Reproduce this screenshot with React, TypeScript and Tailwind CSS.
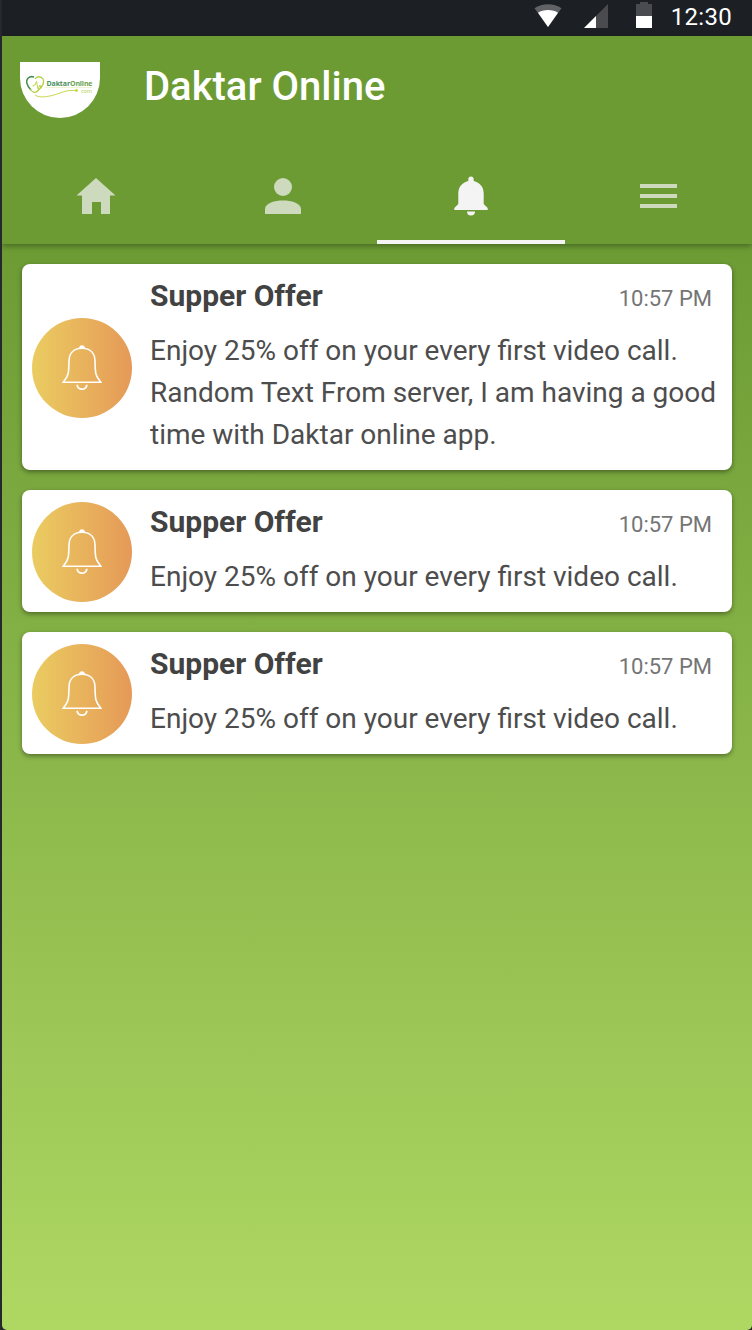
import React from "react";

const offers = [
  {
    title: "Supper Offer",
    time: "10:57 PM",
    lines: [
      "Enjoy 25% off on your every first video call.",
      "Random Text From server, I am having a good",
      "time with Daktar online app.",
    ],
  },
  { title: "Supper Offer", time: "10:57 PM", lines: ["Enjoy 25% off on your every first video call."] },
  { title: "Supper Offer", time: "10:57 PM", lines: ["Enjoy 25% off on your every first video call."] },
];

function StatusBar() {
  return (
    <div className="flex h-9 shrink-0 items-start justify-end bg-[#1c1f24] pr-5 text-white">
      <svg className="mt-1 mr-[22px] h-6 w-7" viewBox="0 0 28 24" fill="#fff">
        <path d="M14 23 0.5 4.3C8-1.2 20-1.2 27.5 4.3Z" fillOpacity=".3" />
        <path d="M14 23 4 8.700C9 5.200 19 5.200 24 8.700Z" />
      </svg>
      <svg className="mt-1 mr-7 h-6 w-6" viewBox="0 0 24 24" fill="#fff">
        <path d="M0 24 24 0V24Z" fillOpacity=".2" />
        <path d="M0 24 12 12V24Z" />
      </svg>
      <svg className="mt-0.5 mr-[19px] h-[26px] w-4" viewBox="0 0 16 26" fill="#fff">
        <path d="M4 0h8v2h4v12H0V2h4Z" fillOpacity=".2" />
        <path d="M0 14h16v12H0z" />
      </svg>
      <span className="text-[24px] leading-[35px] tracking-[0.3px]">12:30</span>
    </div>
  );
}

function Logo() {
  return (
    <svg className="h-14 w-20" viewBox="0 0 80 56" fill="none">
      <path d="M0 0H80V16A40 40 0 0 1 0 16Z" fill="#fff" />
      <path d="M14 15C9 13.500 6 17 6.800 21C7.500 24 9 26 11 28" stroke="#459051" strokeWidth="1.500" />
      <path d="M10 27C12 30 15 32 18 28.500C23 24 25 20 23 17C21 14 17 14 15 17" stroke="#b5cf3f" strokeWidth="1.300" />
      <path d="M12.500 24 15 23 16.500 19.500 18 27 20 23 21 26" stroke="#b9cf35" strokeWidth=".9" />
      <path d="M15 33C20 37 32 34 40 31S50 28.500 56 28.500" stroke="#cad84b" strokeWidth="1" />
      <path d="M25 25.500H72" stroke="#dce7a4" strokeWidth=".5" />
      <circle cx="56.500" cy="28.500" r="1.400" fill="#c5d83a" />
      <text x="26.500" y="23.500" textLength="46" fontFamily="Open Sans" fontSize="7" fontWeight="700" fill="#4b8f60">
        Daktar<tspan fill="#6ba14d">Online</tspan>
      </text>
      <text x="61" y="30.500" textLength="11" fontFamily="Open Sans" fontSize="5.500" fontWeight="600" fill="#c3d878">com</text>
    </svg>
  );
}

function Tabs() {
  return (
    <nav className="grid h-[96px] grid-cols-4">
      <div className="flex justify-center pt-[29px]">
        <svg className="h-[38px] w-10" viewBox="0 0 40 38" fill="#cddabd">
          <path d="M20 1 39.500 18.500H34V37H25V25H16V37H6V18.500H.5Z" />
        </svg>
      </div>
      <div className="flex justify-center pt-[29px]">
        <svg className="h-[38px] w-10" viewBox="0 0 40 38" fill="#cddabd">
          <circle cx="20" cy="10" r="9" />
          <path d="M2 37V32C2 26 12 23.500 20 23.500S38 26 38 32V37Z" />
        </svg>
      </div>
      <div className="flex justify-center border-b-4 border-[#f4f4f4] pt-[28px]">
        <svg className="h-10 w-9" viewBox="0 0 36 40" fill="#f4f4f4">
          <path d="M18 .5C16.300 .5 15.300 1.700 15.300 3.300V5C9 6.500 5.300 11 5.300 17.500V28L1.300 32V34H34.700V32L30.700 28V17.500C30.700 11 27 6.500 20.700 5V3.300C20.700 1.700 19.700 .5 18 .5ZM14 35.500A4 4 0 0 0 22 35.500Z" />
        </svg>
      </div>
      <div className="flex justify-center pt-[36px]">
        <svg className="h-6 w-[37px]" viewBox="0 0 37 24" fill="#cddabd">
          <path d="M0 0h37v4H0zM0 10h37v4H0zM0 20h37v4H0z" />
        </svg>
      </div>
    </nav>
  );
}

function OfferIcon() {
  return (
    <div className="flex size-[100px] shrink-0 items-center justify-center rounded-full bg-linear-to-r from-[#eacc61] to-[#e59957]">
      <svg className="h-[46px] w-10" viewBox="0 0 40 46" fill="none" stroke="#fff">
        <path d="M17 3.500C17 -.8 23 -.8 23 3.500Z" fill="#fff" stroke="none" />
        <path d="M20 3.300C11 3.300 7.200 9 7 16C6.800 28 6.700 31 1.200 37.300H38.800C33.300 31 33.200 28 33 16C32.800 9 29 3.300 20 3.300Z" strokeWidth="1.600" />
        <path d="M15.200 39.700C15.200 45.700 24.800 45.700 24.800 39.700" strokeWidth="1.800" />
      </svg>
    </div>
  );
}

export default function App() {
  return (
    <div className="h-[1330px] w-[752px] overflow-hidden bg-[#25282c] pl-0.5 font-['Roboto',sans-serif]">
      <div className="flex h-full flex-col overflow-hidden rounded-b-[5px]">
        <StatusBar />
        <header className="relative h-[208px] shrink-0 bg-[#6c9b34] shadow-[0_2px_6px_rgba(0,0,0,0.35)]">
          <div className="flex h-28 pt-[26px] pl-[18px]">
            <Logo />
            <h1 className="ml-11 text-[40px] leading-[50px] font-medium text-white">Daktar Online</h1>
          </div>
          <Tabs />
        </header>
        <main className="flex grow flex-col gap-5 bg-linear-to-b from-[#6c9b34] to-[#afd863] pt-5 pr-5 pl-5">
          {offers.map((offer, index) => (
            <article key={index} className="flex items-center rounded-lg bg-white pl-2.5 shadow-[0_2px_5px_rgba(0,0,0,0.4)]">
              <div className="pt-0.5">
                <OfferIcon />
              </div>
              <div className="ml-[18px] grow pt-3 pb-3.5">
                <div className="flex items-baseline justify-between pr-5">
                  <h2 className="text-[30px] leading-[40px] font-bold text-[#424242]">{offer.title}</h2>
                  <time className="text-[22px] leading-[30px] text-[#757575]">{offer.time}</time>
                </div>
                <p className="mt-3.5 text-[28px] leading-[42px] whitespace-nowrap text-[#4d4d4d]">
                  {offer.lines.map((line) => (
                    <span key={line} className="block">{line}</span>
                  ))}
                </p>
              </div>
            </article>
          ))}
        </main>
      </div>
    </div>
  );
}
